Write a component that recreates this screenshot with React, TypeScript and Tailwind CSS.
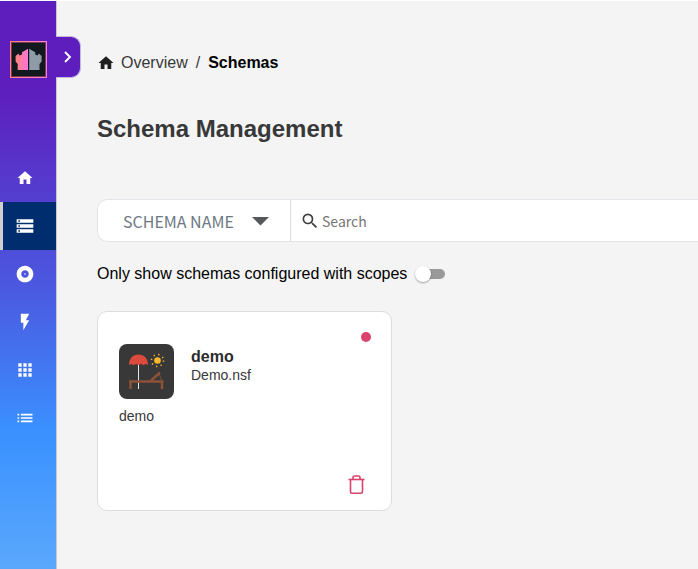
import { useState } from 'react';
import {
  MdAlbum,
  MdApps,
  MdFlashOn,
  MdHome,
  MdList,
  MdSearch,
  MdStorage,
} from 'react-icons/md';

const navItems = [
  { label: 'Overview', icon: MdHome, size: 18 },
  { label: 'Schemas', icon: MdStorage, size: 20, active: true },
  { label: 'Scopes', icon: MdAlbum, size: 20 },
  { label: 'Activity', icon: MdFlashOn, size: 20 },
  { label: 'Applications', icon: MdApps, size: 20 },
  { label: 'Groups', icon: MdList, size: 20 },
];

const schemas = [{ name: 'demo', database: 'Demo.nsf', description: 'demo' }];

function Logo() {
  return (
    <svg viewBox="0 0 37 37" className="h-[37px] w-[37px]" aria-hidden="true">
      <defs>
        <linearGradient id="logo-frame" x1="0" y1="0" x2="1" y2="0">
          <stop offset="0" stopColor="#ff8378" />
          <stop offset="1" stopColor="#ff7fd8" />
        </linearGradient>
        <linearGradient id="logo-left" x1="0" y1="0" x2="1" y2="0">
          <stop offset="0" stopColor="#ff8378" />
          <stop offset="1" stopColor="#ff74dc" />
        </linearGradient>
      </defs>
      <rect width="37" height="37" fill="url(#logo-frame)" />
      <rect x="1" y="1" width="35" height="35" fill="#7a3a50" />
      <rect x="2" y="2" width="33" height="33" fill="#11191f" />
      <path d="M18 7.700V29H7.700V23L5.600 20.500V15L8.500 12.500L9.500 14.500L12 13.500V11.200Z" fill="url(#logo-left)" />
      <path d="M19.200 7.700V29H29.500V23L31.600 20.500V15L28.700 12.500L27.700 14.500L25.200 13.500V11.200Z" fill="#8f9ca8" />
    </svg>
  );
}

function BeachIcon() {
  return (
    <svg viewBox="0 0 55 55" className="h-[55px] w-[55px] shrink-0 rounded-lg bg-[#383838]" aria-hidden="true">
      <rect x="19" y="19" width="1" height="26" fill="#e6e6e6" />
      <path d="M10 21C10 14.500 14 10.500 19.500 10.500S29 14.500 29 21L27 20 24.500 21 22 20 19.500 21 17 20 14.500 21 12 20Z" fill="#dc4a3d" />
      <circle cx="38.500" cy="16.500" r="3.300" fill="#fbb62d" />
      <circle cx="38.500" cy="16.500" r="6" fill="none" stroke="#fbb62d" strokeWidth="1.500" strokeDasharray="1.300 3.412" />
      <path d="M10 37.500H44.500M11.500 37V45M43 37V45" fill="none" stroke="#8d5237" strokeWidth="2.400" />
      <path d="M32 36.500L41 28.500" fill="none" stroke="#8d5237" strokeWidth="2.400" />
      <path d="M40 30L42.500 36" fill="none" stroke="#8d5237" strokeWidth="0.800" />
    </svg>
  );
}

function TrashIcon() {
  return (
    <svg viewBox="0 0 17 19" className="h-[19px] w-[17px]" fill="none" stroke="#d9436d" strokeWidth="1.600" aria-hidden="true">
      <path d="M0.500 4.500H16.500" />
      <path d="M2.500 4.500V16.500Q2.500 18.200 4 18.200H13Q14.500 18.200 14.500 16.500V4.500" />
      <path d="M5 4.500V2.500Q5 1 6.500 1H10.500Q12 1 12 2.500V4.500" />
    </svg>
  );
}

export default function App() {
  const [field, setField] = useState('name');
  const [search, setSearch] = useState('');
  const [onlyScoped, setOnlyScoped] = useState(false);

  return (
    <div className="flex min-h-screen border-t border-white bg-[#f4f4f4] font-['Liberation_Sans',Arial,sans-serif] text-black">
      {/* Sidebar */}
      <aside className="relative w-[57px] shrink-0 border-r border-[#c8c8c8] bg-[linear-gradient(180deg,#5e1ebe_0%,#5e1ebe_16%,#4b58df_50%,#3a91ff_76%,#5aa8fc_100%)]">
        <a href="#home" aria-label="Home" className="mt-10 ml-2.5 block w-[37px]">
          <Logo />
        </a>
        <button
          type="button"
          aria-label="Expand menu"
          className="absolute top-[35px] left-14 flex h-[42px] w-[25px] items-center justify-center rounded-r-[10px] border border-l-0 border-[#c4b8dc] bg-[#5e1ebe] text-white"
        >
          <svg viewBox="0 0 8 12" className="h-3 w-2" fill="none" stroke="currentColor" strokeWidth="1.900" aria-hidden="true">
            <path d="M1 1L6 6L1 11" />
          </svg>
        </button>
        <nav className="mt-[76px]">
          {navItems.map(({ label, icon: Icon, size, active }) => (
            <a
              key={label}
              href={`#${label.toLowerCase()}`}
              aria-label={label}
              className={`flex h-12 items-center border-l-[3px] pl-3 text-white ${
                active ? 'border-[#d0d0d0] bg-[#002d6e]' : 'border-transparent'
              }`}
            >
              <span className="flex w-5 justify-center">
                <Icon size={size} />
              </span>
            </a>
          ))}
        </nav>
      </aside>

      <main className="min-w-0 flex-1 pl-10">
        <nav aria-label="Breadcrumb" className="mt-[50px] flex h-6 items-center">
          <a href="#overview" className="flex items-center gap-1.5 text-[#383838]">
            <MdHome size={18} className="text-[#1f1f1f]" />
            Overview
          </a>
          <span className="mx-2 text-[#383838]">/</span>
          <span className="font-bold">Schemas</span>
        </nav>

        <h1 className="mt-[38px] text-2xl font-bold text-[#383838]">Schema Management</h1>

        {/* Filter and search */}
        <div className="mt-[54px] flex h-[43px] rounded-l-[10px] border border-r-0 border-[#e3e4ea] bg-white font-['Noto_Sans_CJK_SC',sans-serif]">
          <div className="relative w-[193px] shrink-0 border-r border-[#dcdce2]">
            <select
              aria-label="Search by"
              value={field}
              onChange={(e) => setField(e.target.value)}
              className="h-full w-full appearance-none bg-transparent pl-[25px] text-base text-[#6c7882] outline-none"
            >
              <option value="name">SCHEMA NAME</option>
              <option value="nsf">NSF NAME</option>
            </select>
            <svg viewBox="0 0 17 9" className="pointer-events-none absolute top-[17px] right-[21px] h-[9px] w-[17px]" aria-hidden="true">
              <path d="M0 0H17L8.500 8.500Z" fill="#545858" />
            </svg>
          </div>
          <label className="flex min-w-0 flex-1 items-center gap-0.5 pl-[9px]">
            <MdSearch size={20} className="shrink-0 text-[#404040]" />
            <input
              type="text"
              aria-label="Search"
              placeholder="Search"
              value={search}
              onChange={(e) => setSearch(e.target.value)}
              className="min-w-0 flex-1 text-sm outline-none placeholder:text-[#767676]"
            />
          </label>
        </div>

        <label className="mt-5 flex h-6 items-center gap-3">
          Only show schemas configured with scopes
          <input
            type="checkbox"
            checked={onlyScoped}
            onChange={(e) => setOnlyScoped(e.target.checked)}
            className="flex h-2.5 w-[26px] appearance-none items-center rounded-full bg-[#999999] before:-ml-1 before:h-4 before:w-4 before:shrink-0 before:rounded-full before:bg-white before:shadow-[0_1px_2px_rgba(0,0,0,0.35)] checked:justify-end checked:bg-[#5e1ebe]"
          />
        </label>

        {/* Schema cards */}
        <div className="mt-[25px] flex flex-wrap gap-5">
          {schemas.map((schema) => (
            <article
              key={schema.name}
              className="flex h-[200px] w-[295px] flex-col rounded-[10px] border border-[#dddddd] bg-white pt-5 pr-5 pb-4 pl-[21px] text-sm text-[#383838]"
            >
              <div className="h-2.5 w-2.5 shrink-0 self-end rounded-full bg-[#d9436d]" />
              <div className="mt-0.5 flex gap-[17px]">
                <BeachIcon />
                <div className="pt-1">
                  <h2 className="text-base leading-[18px] font-bold text-[#2c2c2c]">{schema.name}</h2>
                  <p className="leading-[18px]">{schema.database}</p>
                </div>
              </div>
              <p className="mt-[7px]">{schema.description}</p>
              <button type="button" aria-label={`Delete ${schema.name}`} className="mt-auto mr-1.5 self-end">
                <TrashIcon />
              </button>
            </article>
          ))}
        </div>
      </main>
    </div>
  );
}
